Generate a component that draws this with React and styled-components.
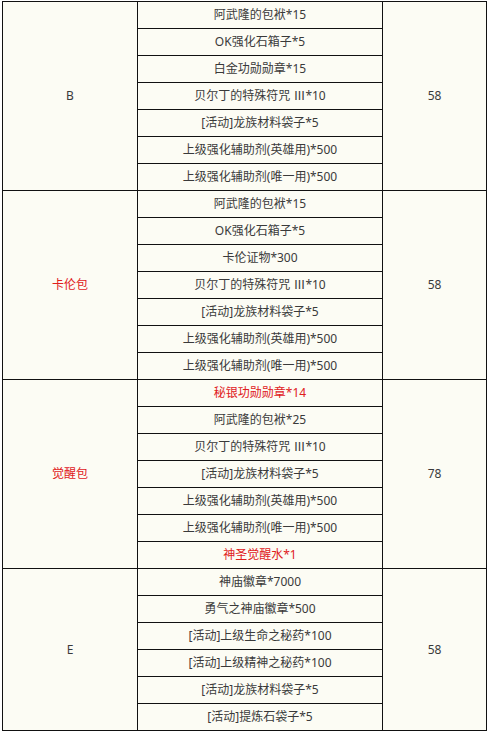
import React from 'react';
import styled, { createGlobalStyle } from 'styled-components';

const Global = createGlobalStyle`
body {
    margin: 0;
    background: #ffffff;
    font-family: "Noto Sans", "Noto Sans CJK SC", sans-serif;
}
`;

const Page = styled.div`
padding: 1px 0 0 2px;
`;

const Table = styled.table`
border-collapse: collapse;
background: #fcfcf4;
table-layout: fixed;
width: 484px;
`;

const Col = styled.col`
width: ${p => p.$w}px;
`;

const Cell = styled.td`
border: 1px solid #111;
height: 26px;
padding: 0;
text-align: center;
vertical-align: middle;
font-size: 12px;
line-height: 14px;
color: ${p => (p.$red ? '#e0201c' : '#3a3a3a')};
`;

const groups = [
    {
        name: 'B',
        price: '58',
        items: [
            '阿武隆的包袱*15',
            'OK强化石箱子*5',
            '白金功勋勋章*15',
            '贝尔丁的特殊符咒 Ⅲ*10',
            '[活动]龙族材料袋子*5',
            '上级强化辅助剂(英雄用)*500',
            '上级强化辅助剂(唯一用)*500',
        ],
    },
    {
        name: '卡伦包',
        red: true,
        price: '58',
        items: [
            '阿武隆的包袱*15',
            'OK强化石箱子*5',
            '卡伦证物*300',
            '贝尔丁的特殊符咒 Ⅲ*10',
            '[活动]龙族材料袋子*5',
            '上级强化辅助剂(英雄用)*500',
            '上级强化辅助剂(唯一用)*500',
        ],
    },
    {
        name: '觉醒包',
        red: true,
        price: '78',
        items: [
            { text: '秘银功勋勋章*14', red: true },
            '阿武隆的包袱*25',
            '贝尔丁的特殊符咒 Ⅲ*10',
            '[活动]龙族材料袋子*5',
            '上级强化辅助剂(英雄用)*500',
            '上级强化辅助剂(唯一用)*500',
            { text: '神圣觉醒水*1', red: true },
        ],
    },
    {
        name: 'E',
        price: '58',
        items: [
            '神庙徽章*7000',
            '勇气之神庙徽章*500',
            '[活动]上级生命之秘药*100',
            '[活动]上级精神之秘药*100',
            '[活动]龙族材料袋子*5',
            '[活动]提炼石袋子*5',
        ],
    },
];

const App = () => {
    return (
        <Page>
            <Global />
            <Table>
                <colgroup>
                    <Col $w={135} />
                    <Col $w={245} />
                    <Col $w={104} />
                </colgroup>
                <tbody>
                    {groups.map(g =>
                        g.items.map((it, i) => {
                            const item = typeof it === 'string' ? { text: it } : it;
                            return (
                                <tr key={g.name + i}>
                                    {i === 0 && (
                                        <Cell rowSpan={g.items.length} $red={g.red}>{g.name}</Cell>
                                    )}
                                    <Cell $red={item.red}>{item.text}</Cell>
                                    {i === 0 && <Cell rowSpan={g.items.length}>{g.price}</Cell>}
                                </tr>
                            );
                        })
                    )}
                </tbody>
            </Table>
        </Page>
    );
};

export default App;
